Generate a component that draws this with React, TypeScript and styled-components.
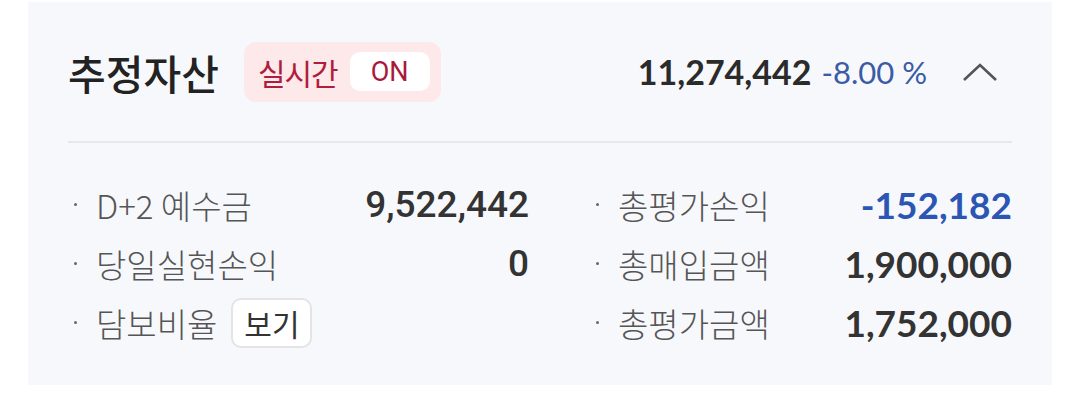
import styled, { createGlobalStyle } from "styled-components";

const GlobalStyle = createGlobalStyle`
    body {
        margin: 0;
        background: #ffffff;
        font-family: "Noto Sans CJK KR", "Noto Sans", sans-serif;
    }
`

interface Item {
    label: string;
    value?: string;
    tone?: 'plain' | 'blue';
    numFont?: 'roboto' | 'lato';
    button?: string;
}

const items: Item[] = [
    { label: 'D+2 예수금', value: '9,522,442', numFont: 'roboto' },
    { label: '총평가손익', value: '-152,182', tone: 'blue', numFont: 'lato' },
    { label: '당일실현손익', value: '0', numFont: 'roboto' },
    { label: '총매입금액', value: '1,900,000', numFont: 'lato' },
    { label: '담보비율', button: '보기' },
    { label: '총평가금액', value: '1,752,000', numFont: 'lato' },
]

function App() {
    return (
        <>
            <GlobalStyle />
            <Panel>
                <Header>
                    <Title>추정자산</Title>
                    <LiveBadge>
                        <LiveText>실시간</LiveText>
                        <LivePill>ON</LivePill>
                    </LiveBadge>
                    <Total>11,274,442</Total>
                    <Rate>-8.00 %</Rate>
                    <Chevron width="36" height="20" viewBox="0 0 36 20">
                        <polyline points="2,18 18,3 34,18" fill="none" stroke="#555" strokeWidth="2.6" />
                    </Chevron>
                </Header>
                <Grid>
                    {items.map((item) => (
                        <Row key={item.label}>
                            <Dot />
                            <Label>{item.label}</Label>
                            {item.button && <SmallButton>{item.button}</SmallButton>}
                            {item.value && (
                                <Value $tone={item.tone ?? 'plain'} $font={item.numFont ?? 'lato'}>
                                    {item.value}
                                </Value>
                            )}
                        </Row>
                    ))}
                </Grid>
            </Panel>
        </>
    )
}

const Panel = styled.div`
    margin: 2px 0 0 28px;
    width: 1024px;
    height: 383px;
    box-sizing: border-box;
    padding: 0 40px;
    background-color: #f7f8fc;
`

const Header = styled.div`
    height: 139px;
    display: flex;
    align-items: center;
    border-bottom: 2px solid #e6e8ec;
`

const Title = styled.h2`
    margin: 0;
    font-size: 41px;
    font-weight: 500;
    color: #222;
`

const LiveBadge = styled.div`
    margin-left: 25px;
    height: 60px;
    box-sizing: border-box;
    padding: 0 11px 0 14px;
    display: flex;
    align-items: center;
    gap: 12px;
    border-radius: 12px;
    background-color: #fde9ea;
`

const LiveText = styled.span`
    font-size: 30px;
    color: #b01c3d;
    letter-spacing: -1px;
`

const LivePill = styled.span`
    width: 80px;
    height: 39px;
    display: flex;
    align-items: center;
    justify-content: center;
    border-radius: 10px;
    background-color: #ffffff;
    font-family: Roboto, sans-serif;
    font-size: 27px;
    color: #a81a3b;
`

const Total = styled.span`
    margin-left: auto;
    font-family: Lato, sans-serif;
    font-weight: 700;
    font-size: 34px;
    color: #2b2b2b;
`

const Rate = styled.span`
    margin-left: 10px;
    font-family: Lato, sans-serif;
    font-size: 31px;
    color: #3a5ba6;
`

const Chevron = styled.svg`
    margin: 0 14px 0 35px;
`

const Grid = styled.div`
    display: grid;
    grid-template-columns: 461px 1fr;
    column-gap: 61px;
    padding-top: 32px;
`

const Row = styled.div`
    height: 59px;
    display: flex;
    align-items: center;
`

const Dot = styled.span`
    width: 3px;
    height: 3px;
    border-radius: 50%;
    background-color: #666;
    margin: 0 19px 0 6px;
`

const Label = styled.span`
    font-size: 33px;
    font-weight: 300;
    color: #555;
`

const SmallButton = styled.button`
    margin-left: 14px;
    width: 81px;
    height: 50px;
    box-sizing: border-box;
    border: 2px solid #e4e4e4;
    border-radius: 10px;
    background-color: #ffffff;
    font-family: "Noto Sans CJK KR", sans-serif;
    font-size: 30px;
    color: #333;
    padding: 0;
`

const Value = styled.span<{ $tone: 'plain' | 'blue'; $font: 'roboto' | 'lato' }>`
    margin-left: auto;
    font-family: ${p => p.$font === 'roboto' ? 'Roboto' : 'Lato'}, sans-serif;
    font-weight: ${p => p.$font === 'roboto' ? 500 : 700};
    font-size: 37px;
    color: ${p => p.$tone === 'blue' ? '#2b56b3' : '#333'};
`

export default App;
